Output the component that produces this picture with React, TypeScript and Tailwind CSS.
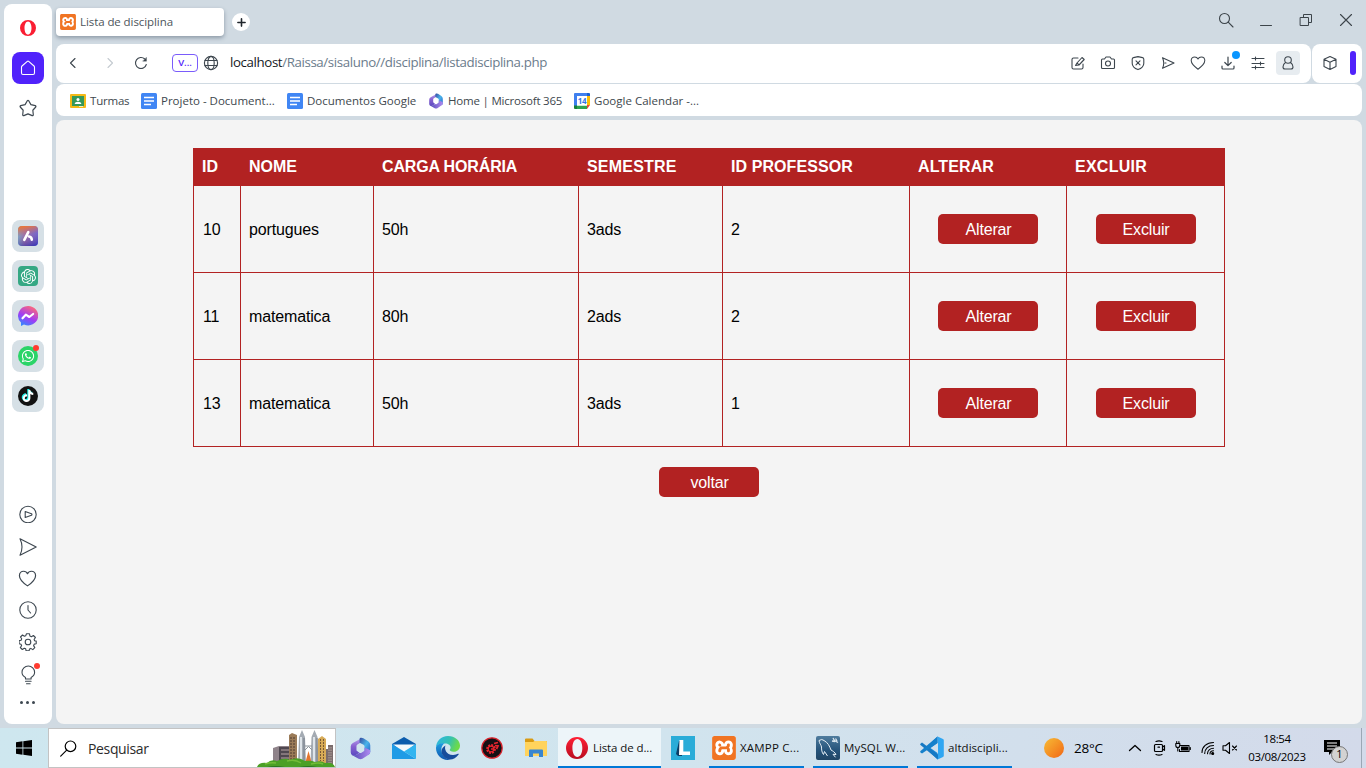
import React from "react";
import { SiOpenai, SiXampp } from "react-icons/si";
import { FaWhatsapp, FaTiktok } from "react-icons/fa";

type IconProps = { size?: number; box?: string; sw?: number; className?: string; children: React.ReactNode };

function Icon({ size = 16, box = "0 0 16 16", sw = 1.1, className = "", children }: IconProps) {
  return (
    <svg
      width={size}
      height={size}
      viewBox={box}
      fill="none"
      stroke="currentColor"
      strokeWidth={sw}
      strokeLinecap="round"
      strokeLinejoin="round"
      className={"block shrink-0 " + className}
    >
      {children}
    </svg>
  );
}

const HEART = "M8 14.2C6 12.8 1.2 9.3 1.2 5.6 1.2 3.4 2.8 1.9 4.7 1.9 6.2 1.9 7.4 2.7 8 4 8.6 2.7 9.8 1.9 11.3 1.9c1.9 0 3.5 1.5 3.5 3.7 0 3.7-4.8 7.2-6.8 8.6Z";

function Xampp({ size }: { size: number }) {
  return (
    <span className="block shrink-0 rounded-[3px] bg-white text-[#f07423]">
      <SiXampp size={size} className="block" />
    </span>
  );
}

function M365({ size, id }: { size: number; id: string }) {
  return (
    <svg width={size} height={size} viewBox="0 0 24 24" className="block shrink-0">
      <defs>
        <linearGradient id={id + "a"} x1="0" y1="0" x2="0" y2="1">
          <stop offset="0" stopColor="#b9a1ee" />
          <stop offset=".5" stopColor="#8660cf" />
          <stop offset="1" stopColor="#5b49c0" />
        </linearGradient>
        <linearGradient id={id + "b"} x1="0" y1="0" x2="1" y2="1">
          <stop offset="0" stopColor="#384a9e" />
          <stop offset=".5" stopColor="#48b4ea" />
          <stop offset="1" stopColor="#2758c8" />
        </linearGradient>
        <linearGradient id={id + "c"} x1="0" y1="0" x2="1" y2="0">
          <stop offset="0" stopColor="#5148b5" />
          <stop offset="1" stopColor="#b08bf0" />
        </linearGradient>
      </defs>
      <path d="M13.500 1 4 6.200Q1.800 7.500 1.800 10v6q0 2 1.500 3 2.500 1 4.500-.5l3-2-3-2.500V9.500q0-1.200 1-1.800l3-1.700Z" fill={`url(#${id}a)`} />
      <path d="M12 .8q1.500-.4 3 .5l5 3.200Q22.200 6 22.200 8.500v7q0 2-1.800 3l-4.200-2.800V10q0-1.200-1-1.800L11 6V2.500Q11 1.200 12 .8Z" fill={`url(#${id}b)`} />
      <path d="M3 18.800q2.800.8 4.800-.4l3.200-2q1 .6 2 0l3.200-2V11l5.500 2.500q.5.500.5 2 0 2-1.700 3L14 22.700q-2 1-4 0Z" fill={`url(#${id}c)`} />
    </svg>
  );
}

function OperaLogo({ size }: { size: number }) {
  return (
    <svg width={size} height={size} viewBox="0 0 24 24" className="block shrink-0">
      <defs>
        <linearGradient id="op" x1="0" y1="0" x2="0" y2="1">
          <stop offset="0" stopColor="#ff2035" />
          <stop offset="1" stopColor="#b80d20" />
        </linearGradient>
      </defs>
      <path fillRule="evenodd" fill="url(#op)" d="M12 0a12 12 0 1 0 0 24 12 12 0 0 0 0-24Zm.4 2.200c3.200 0 5.400 4.200 5.400 9.800s-2.200 9.800-5.400 9.800S7 17.600 7 12s2.200-9.800 5.400-9.800Z" />
    </svg>
  );
}

function Tile({ children }: { children: React.ReactNode }) {
  return <div className="relative mb-2 flex size-8 shrink-0 items-center justify-center rounded-lg bg-[#d6e0e6]">{children}</div>;
}

function Sidebar() {
  return (
    <aside className="ml-1 flex h-[720px] w-12 shrink-0 flex-col items-center rounded-lg bg-white pt-4 text-[#3d4750]">
      <svg width="16" height="16" viewBox="0 0 16 16" className="block shrink-0">
        <path fillRule="evenodd" fill="#fa1e32" d="M8 0a8 8 0 1 0 0 16A8 8 0 0 0 8 0Zm0 1.400c2.100 0 3.500 2.900 3.500 6.600S10.100 14.600 8 14.600 4.500 11.700 4.500 8 5.900 1.400 8 1.400Z" />
      </svg>
      <div className="mt-4 flex size-8 items-center justify-center rounded-lg bg-[#5022fb] text-white">
        <Icon>
          <path d="M1.500 7.200Q1.500 6.500 2 6l5.300-4.600q.7-.6 1.400 0L14 6q.5.500.5 1.200V13q0 1.500-1.500 1.500H3Q1.500 14.500 1.500 13Z" />
        </Icon>
      </div>
      <Icon size={18} className="mt-[15px]" sw={1.05}>
        <path d="M7.400 1.500q.6-.8 1.200 0L10.600 5l3.900.9q.9.400.4 1.200L12.300 10l.4 4q0 1-1 .8L8 13.200l-3.700 1.600q-1 .2-1-.8l.4-4L1.100 7.100q-.5-.8.4-1.200L5.400 5Z" />
      </Icon>
      <div className="mt-[103px]">
        <Tile>
          <svg width="20" height="20" viewBox="0 0 20 20">
            <defs>
              <linearGradient id="aria" x1="0" y1="0" x2="1" y2="0">
                <stop offset="0" stopColor="#58bde0" />
                <stop offset=".35" stopColor="#8a70b8" />
                <stop offset="1" stopColor="#4a63f0" />
              </linearGradient>
              <linearGradient id="aria2" x1=".4" y1="0" x2=".6" y2="1">
                <stop offset="0" stopColor="#e8763c" />
                <stop offset=".45" stopColor="#c06c8c" stopOpacity=".35" />
                <stop offset="1" stopColor="#3a2ca0" stopOpacity=".7" />
              </linearGradient>
            </defs>
            <rect width="20" height="20" rx="4" fill="url(#aria)" />
            <rect width="20" height="20" rx="4" fill="url(#aria2)" />
            <path d="m6.300 13.800 4-7.600M11 10.500q2.500.3 2.800 3.200" stroke="#fff" strokeWidth="2.600" strokeLinecap="round" fill="none" />
          </svg>
        </Tile>
        <Tile>
          <div className="flex size-5 items-center justify-center rounded bg-[#35a884] text-white">
            <SiOpenai size={15} />
          </div>
        </Tile>
        <Tile>
          <svg width="20" height="20" viewBox="0 0 20 20">
            <defs>
              <linearGradient id="msg" x1=".2" y1="1" x2=".7" y2="0">
                <stop offset="0" stopColor="#2b8cff" />
                <stop offset=".45" stopColor="#a03cf5" />
                <stop offset="1" stopColor="#ff6a78" />
              </linearGradient>
            </defs>
            <path d="M10 0a10 9.700 0 1 1-4 18.500L3 20v-3.500A10 9.700 0 0 1 10 0Z" fill="url(#msg)" />
            <path d="m4.500 12.300 3.300-3.600 3.500 2.300 3.800-3" stroke="#fff" strokeWidth="2.200" strokeLinecap="round" strokeLinejoin="round" fill="none" />
          </svg>
        </Tile>
        <Tile>
          <div className="flex size-5 items-center justify-center rounded-full bg-[#2bd468] text-white">
            <FaWhatsapp size={14} />
          </div>
          <span className="absolute top-[5px] right-[5px] size-1.5 rounded-full bg-[#ff3b30]" />
        </Tile>
        <Tile>
          <div className="flex size-5 items-center justify-center rounded-full bg-[#111111]">
            <FaTiktok size={12} className="text-white drop-shadow-[-0.800px_-0.500px_0_#25f4ee]" />
          </div>
        </Tile>
      </div>
      <div className="flex flex-col items-center pr-px">
        <Icon size={18} box="0 0 18 18" className="mt-[85px]">
          <circle cx="9" cy="9.500" r="8.200" />
          <path d="M6.200 6.500v6l6.300-2.200q.9-.8 0-1.600Z" />
        </Icon>
        <Icon size={18} box="0 0 18 18" className="mt-[15px]">
          <path d="M1 .8 17.200 9 1 17.200q4-8.200 0-16.400Z" />
        </Icon>
        <Icon size={19} className="mt-[13px]" sw={1}>
          <path d={HEART} />
        </Icon>
        <Icon size={18} box="0 0 18 18" className="mt-[13px]">
          <circle cx="9" cy="9" r="8.200" />
          <path d="M9 4.500V9l2.600 3" />
        </Icon>
        <Icon size={18} box="0 0 18 18" className="mt-[14px]">
          <circle cx="9" cy="9" r="2.800" />
          <path d="M7.500.8h3l.4 2.200 1.500.7 2-1.200 2 2-1.300 2 .5 1.200 1.600.4v2.600l-2 .4-.6 1.500 1.200 2-2 2-2-1.200-1.300.6-.4 1.800h-3l-.4-2-1.400-.6-2 1.300-2-2 1.300-1.800-.6-1.500-1.900-.5V7.600l2-.4.600-1.400-1.200-1.800 2-2 1.900 1.200 1.300-.5Z" />
        </Icon>
        <div className="relative mt-[14px]">
          <Icon size={20} box="0 0 20 20">
            <path d="M7.500 14v-1.500C5.500 11.500 4 9.800 4 7.300a6.300 6.300 0 0 1 12.600 0c0 2.500-1.500 4.200-3.500 5.200V14ZM7.500 16.200h5.600M8.500 18.800h3.600" />
          </Icon>
          <span className="absolute -top-[2px] -right-[2px] size-1.5 rounded-full bg-[#ff3b30]" />
        </div>
        <div className="mt-4 flex gap-[3px]">
          <i className="size-[3px] rounded-full bg-[#3d4750]" />
          <i className="size-[3px] rounded-full bg-[#3d4750]" />
          <i className="size-[3px] rounded-full bg-[#3d4750]" />
        </div>
      </div>
    </aside>
  );
}

function TabStrip() {
  return (
    <div className="flex h-10 items-start">
      <div className="mt-1 flex h-7 w-[168px] items-center gap-1 rounded bg-white pl-1 shadow-[0_2px_4px_#8c99a6]">
        <Xampp size={16} />
        <span className="text-[11.500px] tracking-[-0.080px] text-[#4d555b]">Lista de disciplina</span>
      </div>
      <div className="mt-[9px] ml-2 flex size-[18px] items-center justify-center rounded-full bg-white text-[#20262c]">
        <Icon size={9} box="0 0 9 9" sw={1.6}>
          <path d="M4.500.9v7.200M.9 4.500h7.200" />
        </Icon>
      </div>
      <div className="mt-2 mr-[8px] ml-auto flex items-center gap-6 text-[#3c444a]">
        <Icon>
          <circle cx="6.500" cy="6.500" r="5" />
          <path d="m10.200 10.200 4.800 4.800" />
        </Icon>
        <Icon sw={1}>
          <path d="M2.500 13.500h11" />
        </Icon>
        <Icon sw={1}>
          <path d="M2.500 5.500h8v8h-8ZM5.500 5.500v-3h8v8h-3" strokeLinejoin="miter" />
        </Icon>
        <Icon>
          <path d="m2.500 2.500 11 11M13.500 2.500l-11 11" />
        </Icon>
      </div>
    </div>
  );
}

function Toolbar() {
  return (
    <div className="flex h-[39px] gap-px">
      <div className="flex w-[1255px] items-center rounded-lg bg-white pb-px pl-[9px] text-[#3d464e]">
        <Icon>
          <path d="M10 3.500 5.500 8l4.500 4.500" />
        </Icon>
        <Icon className="ml-[21px] text-[#c4cad0]">
          <path d="m6 3.500 4.500 4.500L6 12.500" />
        </Icon>
        <Icon className="ml-[15px]">
          <path d="M13.300 9.500A5.500 5.500 0 1 1 11.800 4" />
          <path d="M13.500 2.500v3.700H9.800Z" fill="currentColor" strokeWidth=".3" />
        </Icon>
        <div className="ml-[23px] flex h-[18px] w-[26px] items-center justify-center rounded border border-[#7a5cfb] text-[9.500px] font-semibold text-[#5022fb]">V...</div>
        <Icon className="ml-[5px]" sw={1.15}>
          <circle cx="8" cy="8" r="6.600" />
          <ellipse cx="8" cy="8" rx="3.200" ry="6.600" />
          <path d="M2 5.500h12M2 10.500h12" />
        </Icon>
        <span className="ml-[11px] text-[13.300px] tracking-[-0.390px] whitespace-nowrap text-[#6b7c8c]">
          <span className="text-[#15191d]">localhost</span>/Raissa/sisaluno//disciplina/listadisciplina.php
        </span>
        <div className="mr-[15px] ml-auto flex items-center gap-[14px]">
          <Icon>
            <path d="M8 3H3.500Q2 3 2 4.500v8Q2 14 3.500 14h8q1.500 0 1.500-1.500V9M5.500 10.500 7 8l5-5.500 2.200 2L9 10ZM7 8l1.800 1.700" />
          </Icon>
          <Icon>
            <path d="M2.500 4H4.500L6 2h4l1.500 2h2q1 0 1 1v7.500q0 1-1 1h-11q-1 0-1-1V5q0-1 1-1Z" />
            <circle cx="8" cy="8.500" r="2.500" />
          </Icon>
          <Icon>
            <path d="m8 1.600 4.500 1q1.300.3 1.300 1.600v4c0 3.500-3.300 5.500-5.800 6.400-2.500-.9-5.800-2.900-5.800-6.400v-4q0-1.300 1.300-1.600ZM6 5.800l4 4M10 5.800l-4 4" />
          </Icon>
          <Icon>
            <path d="M2.500 2.800 14 8 2.500 13.300Q5 8 2.500 2.800ZM5 8h1" />
          </Icon>
          <Icon sw={1.05}>
            <path d={HEART} />
          </Icon>
          <span className="relative">
            <Icon sw={1.2}>
              <path d="M8 2v8.500M4.800 7.500 8 10.700l3.200-3.200M2 11v2q0 1 1 1h10q1 0 1-1v-2" />
            </Icon>
            <i className="absolute -top-1 -right-1 size-2 rounded-full bg-[#0a96ff]" />
          </span>
          <Icon>
            <path d="M2 3.500h12M2 8.500h12M2 12.500h12M5.500 2v3M10.500 7v3M5.500 11v3" />
          </Icon>
          <span className="-ml-1 -mr-1 flex size-6 items-center justify-center rounded bg-[#e7ecf0]">
            <Icon>
              <circle cx="8" cy="5" r="3.300" />
              <path d="M5.500 7.500C4 8.500 3 10 3 12q0 2 2 2h6q2 0 2-2c0-2-1-3.500-2.500-4.500" />
            </Icon>
          </span>
        </div>
      </div>
      <div className="flex flex-1 items-center rounded-lg bg-white pb-px pl-[10px] text-[#3d464e]">
        <Icon>
          <path d="m8 1.500 6 2.700v7.400l-6 2.900-6-2.900V4.200ZM2 4.200l6 3 6-3M8 7.200v7.300" />
        </Icon>
        <div className="ml-auto mr-[6px] h-6 w-1.5 rounded-[3px] bg-[#5022fb]" />
      </div>
    </div>
  );
}

function DocsIcon() {
  return (
    <svg width="16" height="16" viewBox="0 0 16 16" className="block shrink-0">
      <rect width="16" height="16" rx="1.500" fill="#4086f4" />
      <path d="M3 4.500h10M3 8h10M3 11.500h7" stroke="#fff" strokeWidth="1.700" />
    </svg>
  );
}

function Bookmark({ icon, label, width, track }: { icon: React.ReactNode; label: string; width: string; track: string }) {
  return (
    <div className={"flex shrink-0 items-center gap-1 whitespace-nowrap " + width}>
      {icon}
      <span className={"pt-px " + track}>{label}</span>
    </div>
  );
}

function Bookmarks() {
  return (
    <div className="mt-px flex h-8 items-center rounded-lg bg-white pt-px pl-[14px] text-[11.500px] text-[#40474d]">
      <Bookmark
        width="w-[71px]"
        track="tracking-[-0.200px]"
        label="Turmas"
        icon={
          <svg width="16" height="16" viewBox="0 0 16 16" className="block shrink-0">
            <rect y="1" width="16" height="14" rx="1" fill="#f4b916" />
            <rect x="2" y="3" width="12" height="10" fill="#35985a" />
            <circle cx="8" cy="6.500" r="1.500" fill="#fff" />
            <path d="M4.500 11q.5-2.300 3.500-2.300T11.500 11Z" fill="#fff" />
            <path d="M9 13h4v1H9Z" fill="#fff" opacity=".7" />
          </svg>
        }
      />
      <Bookmark width="w-[146px]" track="tracking-[0px]" label="Projeto - Document..." icon={<DocsIcon />} />
      <Bookmark width="w-[141px]" track="tracking-[0px]" label="Documentos Google" icon={<DocsIcon />} />
      <Bookmark width="w-[146px]" track="tracking-[-0.200px]" label="Home | Microsoft 365" icon={<M365 size={16} id="bm" />} />
      <Bookmark
        width="w-[130px]"
        track="tracking-[0.020px]"
        label="Google Calendar -..."
        icon={
          <span className="relative block size-4 shrink-0">
            <svg width="16" height="16" viewBox="0 0 16 16" className="block">
              <path d="M1 0h12v3H3v10H0V1q0-1 1-1Z" fill="#3f7fee" />
              <path d="M13 0h2q1 0 1 1v2h-3Z" fill="#1a60cf" />
              <path d="M13 3h3v9h-3Z" fill="#fcbc05" />
              <path d="M3 12.500h10V16H3Z" fill="#2ea24f" />
              <path d="M0 12.500h3V16H1q-1 0-1-1Z" fill="#188038" />
              <path d="M13 12h3l-3 4Z" fill="#ea4335" />
              <path d="M3 3h10v9.500H3Z" fill="#fff" />
            </svg>
            <b className="absolute inset-0 flex items-center justify-center text-[8px] tracking-[-0.300px] text-[#3173e3]">14</b>
          </span>
        }
      />
    </div>
  );
}

const HEAD = [
  ["ID", "w-12"],
  ["NOME", "w-[133px]"],
  ["CARGA HORÁRIA", "w-[205px] tracking-[-0.150px]"],
  ["SEMESTRE", "w-36 tracking-[0.200px]"],
  ["ID PROFESSOR", "w-[187px] tracking-[0.080px]"],
  ["ALTERAR", "w-[157px] tracking-[0.100px]"],
  ["EXCLUIR", "w-[158px] tracking-[0.250px]"],
];

const ROWS = [
  ["10", "portugues", "50h", "3ads", "2"],
  ["11", "matematica", "80h", "2ads", "2"],
  ["13", "matematica", "50h", "3ads", "1"],
];

function RedButton({ children }: { children: React.ReactNode }) {
  return (
    <button className="mx-auto block h-[30px] w-[100px] rounded-[5px] bg-[#b22222] pt-px pl-px text-base leading-[30px] tracking-[-0.150px] text-white">
      {children}
    </button>
  );
}

function Page() {
  return (
    <main className="mt-1 h-[604px] rounded-lg bg-[#f4f4f4] pt-7 font-['Liberation_Sans',Arial,sans-serif] text-base text-black">
      <table className="mx-auto w-[1032px] table-fixed border-separate border-spacing-0">
        <thead>
          <tr className="h-[38px] bg-[#b22222] text-left text-white">
            {HEAD.map(([label, width]) => (
              <th key={label} className={"p-0 pl-2 font-bold first:pl-[9px] " + width}>
                {label}
              </th>
            ))}
          </tr>
        </thead>
        <tbody>
          {ROWS.map((row) => (
            <tr key={row[0]} className="h-[87px]">
              {row.map((cell, i) => (
                <td key={i} className="border-r border-b border-[#b22222] p-0 pt-[2px] pl-2 tracking-[-0.150px] first:border-l first:pl-[9px]">
                  {cell}
                </td>
              ))}
              <td className="border-r border-b border-[#b22222] p-0">
                <RedButton>Alterar</RedButton>
              </td>
              <td className="border-r border-b border-[#b22222] p-0">
                <RedButton>Excluir</RedButton>
              </td>
            </tr>
          ))}
        </tbody>
      </table>
      <div className="mt-5">
        <RedButton>voltar</RedButton>
      </div>
    </main>
  );
}

function CityScape() {
  return (
    <svg width="78" height="38" viewBox="0 0 78 38" className="block">
      <path d="M16 19 22 17h14v17H16Z" fill="#8f838a" />
      <path d="M22 18h14v16H22Z" fill="#4f4750" />
      <path d="M24 21h10M24 25h10M24 29h10" stroke="#b9a5a6" />
      <path d="M32 6 35 4l5 2v28h-8Z" fill="#9b7b58" />
      <path d="M34 8v24M37 8v24" stroke="#4f3d30" strokeDasharray="2 1" />
      <path d="M45 1 48 8l1 26h-8l1-26ZM57.500 1l3 7 1 26h-8l1-26Z" fill="#a4abb3" />
      <path d="M44 8v26M57 8v26" stroke="#dfe5ea" strokeWidth="2" />
      <path d="M47 9v25M60 9v25" stroke="#747d88" />
      <path d="M48 17h7M48 21l3.500-3.500L55 21" stroke="#8c949b" fill="none" />
      <path d="m51.500 22 3 11h-6Z" fill="#e5752d" />
      <path d="m61 10 4-3 4 3v25h-8Z" fill="#d7ab57" />
      <path d="M63.500 10v22M66.500 10v22" stroke="#795a35" strokeDasharray="2 1" />
      <path d="M69 20h2v-4h5v20h-7Z" fill="#7a6c6c" />
      <path d="M72 18v16M74 18v16" stroke="#b6a5a0" strokeDasharray="1.500 1" />
      <path d="M0 38q2-5 10-4 4-4 10-2 8-4 13-1 8-4 15 1 6-1 10 1 6-2 10 1 8-1 10 4Z" fill="#4ba026" />
      <path d="M8 35q6-2 11-1M30 32q8-2 14 2M54 35q8-2 12 0" stroke="#74bd38" strokeWidth="1.500" fill="none" />
      <path d="M10 38q8-2 18 0M42 38q10-2 18 0" fill="#2d7420" />
    </svg>
  );
}

function TaskButton({ icon, label, width, track }: { icon: React.ReactNode; label: string; width: string; track: string }) {
  return (
    <div className={"flex h-10 shrink-0 items-center gap-1 border-b-2 border-[#0078d7] pt-[2px] text-[11.500px] whitespace-nowrap text-[#111] " + width}>
      {icon}
      <span className={track}>{label}</span>
    </div>
  );
}

function Taskbar() {
  const slot = "flex w-11 shrink-0 items-center justify-center";
  return (
    <footer className="mt-1 flex h-10 items-center bg-linear-to-r from-[#cee7ef] via-[#d1e4ee] to-[#d3daea] text-black">
      <div className="flex w-12 shrink-0 justify-center">
        <svg width="16" height="16" viewBox="0 0 16 16">
          <path d="M0 2.300 6.500 1.300v6.200H0ZM7.300 1.200 16 0v7.500H7.300ZM0 8.400h6.500v6.300L0 13.700ZM7.300 8.400H16V16l-8.700-1.200Z" fill="#000" />
        </svg>
      </div>
      <div className="mr-[2px] flex h-10 w-72 shrink-0 items-center border border-[#c3c3c3] bg-white pl-[11px]">
        <Icon size={17} box="0 0 17 17" sw={1.2}>
          <circle cx="10.500" cy="6.300" r="5.300" />
          <path d="m6.700 10.100-6 6" />
        </Icon>
        <span className="ml-[11px] text-[14px] tracking-[-0.350px] text-[#2b2b2b]">Pesquisar</span>
        <div className="mt-auto ml-auto">
          <CityScape />
        </div>
      </div>
      <div className={slot}>
        <M365 size={23} id="tb" />
      </div>
      <div className={slot}>
        <svg width="24" height="24" viewBox="0 0 24 24">
          <path d="M0 8 12 1l12 7v4H0Z" fill="#0b5cad" />
          <path d="M1 8.500h22L12 17Z" fill="#f4f9fc" />
          <path d="M0 8v15h24Z" fill="#1f9be6" />
          <path d="M24 8 12 15.500 24 23Z" fill="#32b5f0" />
        </svg>
      </div>
      <div className={slot}>
        <svg width="24" height="24" viewBox="0 0 24 24">
          <defs>
            <linearGradient id="e1" x1="0" y1="0" x2="1" y2=".3">
              <stop offset="0" stopColor="#2cb5e8" />
              <stop offset=".6" stopColor="#35c1b0" />
              <stop offset="1" stopColor="#6cda4a" />
            </linearGradient>
            <linearGradient id="e2" x1="0" y1="0" x2="0" y2="1">
              <stop offset="0" stopColor="#1e9de0" />
              <stop offset="1" stopColor="#0f55ae" />
            </linearGradient>
          </defs>
          <path d="M0 12C0 5 5 0 12 0c7 0 12 4.500 12 9.500 0 4-3 6.300-6.500 6.300-2.500 0-3.800-1-3.800-1.700 0-.6.900-1 .9-2.500 0-2.300-2.300-4-5.500-4C4.500 7.600 0 9 0 12Z" fill="url(#e1)" />
          <path d="M0 12c0-3 3.500-5 8.500-4.800C6 9 5 11.500 5.500 15c.7 5 5 8 9 8.600C7 25.500 0 19.500 0 12Z" fill="url(#e2)" />
          <path d="M9.500 9.500c-1.500 3 .5 9.500 7.500 9.500 2.500 0 4-.8 5-1.200.6-.3 1 .2.600.8-2 3-5.500 5-8.600 5C9 23 5.500 19 5.500 15c0-2.500 2-4.500 4-5.500Z" fill="#164c9b" />
        </svg>
      </div>
      <div className={slot}>
        <svg width="22" height="22" viewBox="0 0 22 22">
          <circle cx="11" cy="11" r="10.200" fill="#161014" stroke="#d9232c" strokeWidth="1.200" />
          <circle cx="10" cy="12" r="4" fill="none" stroke="#e8252e" strokeWidth="1.800" strokeDasharray="2 1.100" />
          <circle cx="10" cy="12" r="2.800" fill="none" stroke="#e8252e" strokeWidth="1.200" />
          <path d="M10 12h2.500M13 6.500l4-1M14 8.500l3 .5-1.500 3" stroke="#e8252e" strokeWidth="1.700" fill="none" />
        </svg>
      </div>
      <div className={slot}>
        <svg width="22" height="20" viewBox="0 0 22 20">
          <path d="M0 1.500Q0 .5 1 .5h6.500L9.500 3H21q1 0 1 1v4H0Z" fill="#d99a12" />
          <path d="M0 4h8l1.500-1H21q1 0 1 1v14H0Z" fill="#ffd35c" />
          <path d="M4 12.500q0-1 1-1h12q1 0 1 1V19h-4v-3.500H8V19H4Z" fill="#3986cf" />
        </svg>
      </div>
      <TaskButton width="w-[103px] bg-[#edf5f9] pl-2" track="pl-px tracking-[-0.100px]" icon={<OperaLogo size={22} />} label="Lista de d..." />
      <div className={slot}>
        <svg width="24" height="24" viewBox="0 0 24 24">
          <path d="M0 0h24v24H0Z" fill="#2aacd8" />
          <path d="M8 5 5 18l2 2h4V5Z" fill="#0c3d66" />
          <path d="M8.500 4h3.800v11.500H19V19H8Z" fill="#fff" />
        </svg>
      </div>
      <TaskButton width="ml-1 w-[95px] pl-[3px]" track="tracking-[0.200px]" icon={<Xampp size={24} />} label="XAMPP C..." />
      <TaskButton
        width="ml-[9px] w-[95px] pl-[3px]"
        track="tracking-[0.150px]"
        label="MySQL W..."
        icon={
          <svg width="24" height="24" viewBox="0 0 24 24" className="shrink-0">
            <defs>
              <linearGradient id="my" x1="0" y1="0" x2="0" y2="1">
                <stop offset="0" stopColor="#4f7c9e" />
                <stop offset=".6" stopColor="#25537a" />
                <stop offset="1" stopColor="#214565" />
              </linearGradient>
            </defs>
            <rect width="24" height="24" rx="2" fill="url(#my)" />
            <path d="M3 4.500Q6 2.500 8 4.500c4 2.200 5.500 5.500 7 9.500 1.500.8 4 2.300 5 4.500l-3-.2 2.500 3M3 4.500c.3 3 2.300 4.500 2.500 6.500 0 2.500.3 5.500 2 7.500l1-3 3 4.500" fill="none" stroke="#e5eef5" strokeWidth="1" />
            <path d="m17 2 1.500 2.500 3.500 2M19.500 2.500 21 5M16 5l3 .5" stroke="#dbe7ef" strokeWidth="1.300" fill="none" />
          </svg>
        }
      />
      <TaskButton
        width="ml-[9px] w-[95px] pl-[3px]"
        track="tracking-[0.050px]"
        label="altdiscipli..."
        icon={
          <svg width="24" height="24" viewBox="0 0 24 24" className="shrink-0">
            <path d="M17.500.5 5.500 12l12 11.500V17L10.500 12l7-5Z" fill="#1b8ad8" />
            <path d="m2 6.500 16 12v5L.500 9q-.6-.6 0-1.200Z" fill="#1679c4" />
            <path d="M2 17.500.500 16.200q-.6-.6 0-1.200L17.500.5V7Z" fill="#1580cb" />
            <path d="m17 .2 6 2.800q.8.400.8 1.300v15.400q0 .9-.8 1.300l-6 2.800q1-.5 1-1.800V2Q18 .7 17 .2Z" fill="#2fa6f2" />
          </svg>
        }
      />
      <div className="ml-8 size-5 shrink-0 rounded-full bg-linear-to-br from-[#f5bb35] to-[#f06414]" />
      <span className="ml-[10px] w-[54px] shrink-0 text-[13.500px] tracking-[-0.200px]">28°C</span>
      <Icon size={14} box="0 0 14 14" className="ml-0" sw={1.3}>
        <path d="m1.500 9.500 5.500-5 5.500 5" />
      </Icon>
      <Icon className="ml-[9px]" sw={1.2}>
        <path d="M4.500 4.500h6q1 0 1 1v5q0 1-1 1h-6q-1 0-1-1v-5q0-1 1-1ZM11.500 7l2-1.300v4.600l-2-1.300M5 1.500q3-1.300 6 0M5 14.500q3 1.300 6 0M7 7.200h1.500" />
      </Icon>
      <Icon className="ml-[8px]" sw={1.1}>
        <path d="M5 5.500h9v6H4.500v-2M15.300 7.500v2" />
        <path d="M6.500 7h6v3h-6Z" fill="currentColor" />
        <path d="M.800 3.500h4v2q0 2-2 2t-2-2ZM1.700 1.500v2M3.900 1.500v2M2.800 7.500v3.500" />
      </Icon>
      <Icon className="ml-[9px]" sw={1.1}>
        <path d="M2 12.500C2 7 6.500 2.500 13.500 2.500M4.700 13.500C4.700 9 8 5.500 13.500 5.500M7.500 13.800c0-3 2.500-5.500 6-5.500M10 14c0-1.800 1.500-3.200 3.500-3.200" />
        <circle cx="12.700" cy="13.500" r="1" fill="currentColor" />
      </Icon>
      <Icon className="ml-[6px]" sw={1.1}>
        <path d="M1 5.700h2.500L7.500 2.500v11l-4-3.200H1ZM10.500 6l4 4M14.500 6l-4 4" />
      </Icon>
      <div className="ml-[7px] w-16 shrink-0 pb-px text-center text-[11.500px] leading-[18px] tracking-[-0.350px] whitespace-nowrap">
        <div>18:54</div>
        <div>03/08/2023</div>
      </div>
      <div className="relative ml-[15px] h-5 w-6 shrink-0">
        <svg width="24" height="24" viewBox="0 0 24 24">
          <path d="M0 2h16v12H8l-3 3v-3H0Z" fill="#000" />
          <path d="M3 5h10M3 8h10M3 11h7" stroke="#fff" strokeWidth="1.100" />
        </svg>
        <span className="absolute top-[8px] left-[7px] flex size-[17px] items-center justify-center rounded-full border border-[#777] bg-[#d2d2d2] text-[11px]">1</span>
      </div>
      <div className="ml-auto mr-1 h-10 w-px bg-[#9ba7b5]" />
    </footer>
  );
}

export default function App() {
  return (
    <div className="h-[768px] w-[1366px] overflow-hidden bg-[#d0dae2] pt-1 font-['Open_Sans','Noto_Sans',sans-serif]">
      <div className="flex">
        <Sidebar />
        <div className="mx-1 flex min-w-0 flex-1 flex-col">
          <TabStrip />
          <Toolbar />
          <Bookmarks />
          <Page />
        </div>
      </div>
      <Taskbar />
    </div>
  );
}
